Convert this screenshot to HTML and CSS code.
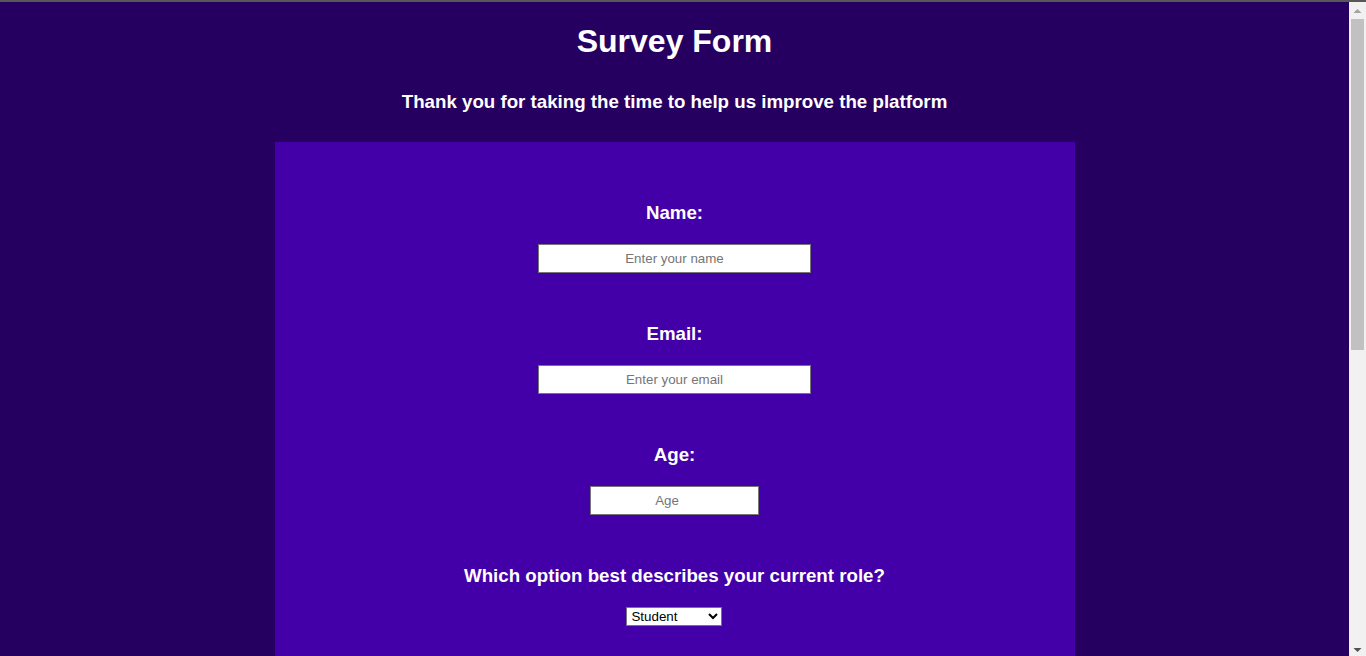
FILE: index.html
```html
<!DOCTYPE html>
<html lang="en">
<head>
<meta charset="utf-8">
<title>Survey Form</title>
<link rel="stylesheet" href="styles.css">
</head>
<body>
<div class="topline"></div>
<div class="viewport">
  <div class="page">
    <header class="header">
      <h1 class="title" id="title">Survey Form</h1>
      <p class="description" id="description">Thank you for taking the time to help us improve the platform</p>
    </header>
    <form class="survey" id="survey-form">
      <div class="field">
        <label class="label" for="name" id="name-label">Name:</label>
        <input class="input input-wide" type="text" id="name" placeholder="Enter your name" required>
      </div>
      <div class="field">
        <label class="label" for="email" id="email-label">Email:</label>
        <input class="input input-wide" type="email" id="email" placeholder="Enter your email" required>
      </div>
      <div class="field">
        <label class="label" for="number" id="number-label">Age:</label>
        <input class="input input-narrow" type="number" id="number" min="10" max="99" placeholder="Age">
      </div>
      <div class="field">
        <label class="label" for="dropdown">Which option best describes your current role?</label>
        <select class="select" id="dropdown">
          <option>Student</option>
          <option>Full Time Job</option>
          <option>Full Time Learner</option>
          <option>Prefer not to say</option>
          <option>Other</option>
        </select>
      </div>
      <div class="field">
        <p class="label">Would you recommend us to a friend?</p>
        <div class="choices">
          <label class="choice"><input type="radio" name="rec"> Definitely</label>
          <label class="choice"><input type="radio" name="rec"> Maybe</label>
          <label class="choice"><input type="radio" name="rec"> Not sure</label>
        </div>
      </div>
      <div class="field">
        <label class="label" for="comments">Any comments or suggestions?</label>
        <textarea class="textarea" id="comments" placeholder="Enter your comment here..."></textarea>
      </div>
      <div class="field">
        <button class="submit" type="submit" id="submit">Submit</button>
      </div>
    </form>
  </div>
  <div class="scrollbar" aria-hidden="true">
    <div class="sb-button">
      <svg width="17" height="17" viewBox="0 0 17 17"><path d="M4.5 11h8L8.5 7z" fill="#a3a3a3"/></svg>
    </div>
    <div class="sb-track">
      <div class="sb-thumb"></div>
    </div>
    <div class="sb-button">
      <svg width="17" height="17" viewBox="0 0 17 17"><path d="M4.5 9h8L8.5 13z" fill="#505050"/></svg>
    </div>
  </div>
</div>
</body>
</html>
```
FILE: styles.css
```css
html,
body {
  height: 100%;
}
body {
  margin: 0;
  overflow: hidden;
  display: flex;
  flex-direction: column;
  font-family: "Liberation Sans", Arial, sans-serif;
  color: #ffffff;
  background: #250060;
}
.topline {
  height: 2px;
  flex: none;
  background: #585858;
}
.viewport {
  flex: 1;
  min-height: 0;
  display: flex;
}
.page {
  flex: 1;
  min-width: 0;
  overflow: hidden;
  background: #250060;
}
.scrollbar {
  width: 17px;
  flex: none;
  display: flex;
  flex-direction: column;
  background: #f1f1f1;
}
.sb-button {
  height: 17px;
  flex: none;
}
.sb-button svg {
  display: block;
}
.sb-track {
  flex: 1;
  display: flex;
  flex-direction: column;
}
.sb-thumb {
  height: 331px;
  margin: 0 2px;
  background: #c1c1c1;
}
.header {
  display: flex;
  flex-direction: column;
  align-items: center;
  padding-top: 21px;
}
.title {
  margin: 0;
  font-size: 32px;
  font-weight: bold;
  line-height: 37px;
}
.description {
  margin: 31px 0 0;
  font-size: 18.72px;
  font-weight: bold;
  line-height: 22px;
}
.survey {
  width: 800px;
  margin: 29px auto 40px;
  background: #4400a8;
  padding: 60px 0 60px;
  display: flex;
  flex-direction: column;
  align-items: center;
  gap: 50px;
}
.field {
  display: flex;
  flex-direction: column;
  align-items: center;
  gap: 20px;
}
.label {
  margin: 0;
  font-size: 18.72px;
  font-weight: bold;
  line-height: 22px;
  text-align: center;
}
.input {
  box-sizing: border-box;
  height: 29px;
  border: 1px solid #767676;
  background: #ffffff;
  font-family: "Liberation Sans", Arial, sans-serif;
  font-size: 13.333px;
  text-align: center;
  padding: 0 4px;
  color: #000;
}
.input::placeholder {
  color: #757575;
}
.input-wide {
  width: 273px;
}
.input-narrow {
  width: 169px;
}
.select {
  box-sizing: border-box;
  width: 96px;
  height: 19px;
  font-family: "Liberation Sans", Arial, sans-serif;
  font-size: 13.333px;
  border: 1px solid #767676;
  background: #ffffff;
  color: #000;
  border-radius: 0;
}
.choices {
  display: flex;
  flex-direction: column;
  align-items: flex-start;
  gap: 8px;
  font-size: 16px;
}
.choice {
  display: flex;
  align-items: center;
  gap: 6px;
}
.textarea {
  width: 400px;
  height: 100px;
  font-family: "Liberation Sans", Arial, sans-serif;
  font-size: 14px;
}
.submit {
  width: 200px;
  height: 40px;
  font-size: 18px;
  font-weight: bold;
  border: none;
  background: #ffffff;
  color: #4400a8;
}
```
